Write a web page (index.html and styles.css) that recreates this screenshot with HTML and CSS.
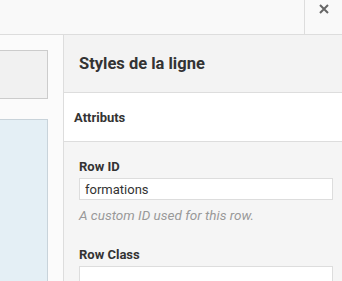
FILE: index.html
```html
<!DOCTYPE html>
<html lang="en">
<head>
    <meta charset="UTF-8">
    <title>Styles de la ligne</title>
    <link rel="stylesheet" href="styles.css">
</head>
<body>

    <!-- Top bar -->
    <div class="topbar">
        <div class="close">
            <svg width="10" height="10" viewBox="0 0 10 10">
                <path d="M1 1 L9 9 M9 1 L1 9" stroke="#666" stroke-width="2" fill="none"/>
            </svg>
        </div>
    </div>

    <div class="main">
        <!-- Builder canvas (left) -->
        <div class="canvas">
            <div class="row-box"></div>
            <div class="row-box row-active"></div>
        </div>

        <!-- Settings panel -->
        <div class="panel">
            <div class="panel-header">
                <h2>Styles de la ligne</h2>
            </div>
            <div class="panel-tab">Attributs</div>
            <div class="panel-fields">
                <div class="field">
                    <label for="rowId">Row ID</label>
                    <input type="text" id="rowId" value="formations">
                    <p class="help">A custom ID used for this row.</p>
                </div>
                <div class="field">
                    <label for="rowClass">Row Class</label>
                    <input type="text" id="rowClass">
                </div>
            </div>
        </div>
    </div>

</body>
</html>
```

FILE: styles.css
```css
body {
    font-family: Roboto, "Liberation Sans", sans-serif;
    margin: 0;
    padding: 0;
    color: #333;
    background-color: #fafafa;
    overflow: hidden;
}

.topbar {
    height: 34px;
    background-color: #f9f9f9;
    border-bottom: 1px solid #ddd;
    display: flex;
    justify-content: flex-end;
}

.close {
    width: 38px;
    border-left: 1px solid #ddd;
    display: flex;
    justify-content: center;
    padding-top: 4px;
    box-sizing: border-box;
}

.main {
    display: flex;
    height: 246px;
    overflow: hidden;
}

.canvas {
    width: 63px;
    padding-top: 15px;
    box-sizing: border-box;
    background-color: #fbfbfb;
    display: flex;
    flex-direction: column;
    gap: 20px;
}

.row-box {
    width: 48px;
    height: 49px;
    flex-shrink: 0;
    box-sizing: border-box;
    border: 1px solid #ccc;
    border-left: none;
    background-color: #f1f1f1;
}

.row-active {
    height: 162px;
    background-color: #e4eff5;
    border-color: #c8d3da;
    border-bottom: none;
}

.panel {
    flex: 1;
    border-left: 1px solid #ddd;
    background-color: #f5f5f5;
}

.panel-header {
    height: 57px;
    background-color: #f3f3f3;
    border-bottom: 1px solid #ddd;
    display: flex;
    align-items: center;
    padding-left: 15px;
}

h2 {
    margin: 0;
    font-size: 16.5px;
    font-weight: bold;
    color: #333;
}

.panel-tab {
    height: 48px;
    background-color: #fff;
    border-bottom: 1px solid #ddd;
    display: flex;
    align-items: center;
    padding-left: 10px;
    font-size: 13px;
    font-weight: bold;
}

.panel-fields {
    padding: 17px 9px 0 15px;
}

.field {
    margin-bottom: 24px;
}

label {
    display: block;
    font-size: 13px;
    font-weight: bold;
    line-height: 15px;
    margin-bottom: 4px;
}

input {
    display: block;
    width: 100%;
    height: 22px;
    box-sizing: border-box;
    padding: 0 5px;
    border: 1px solid #ddd;
    background-color: #fff;
    font-family: Roboto, "Liberation Sans", sans-serif;
    font-size: 13px;
    color: #333;
}

.help {
    margin: 8px 0 0;
    font-size: 13.5px;
    line-height: 15px;
    font-style: italic;
    color: #999;
}
```
